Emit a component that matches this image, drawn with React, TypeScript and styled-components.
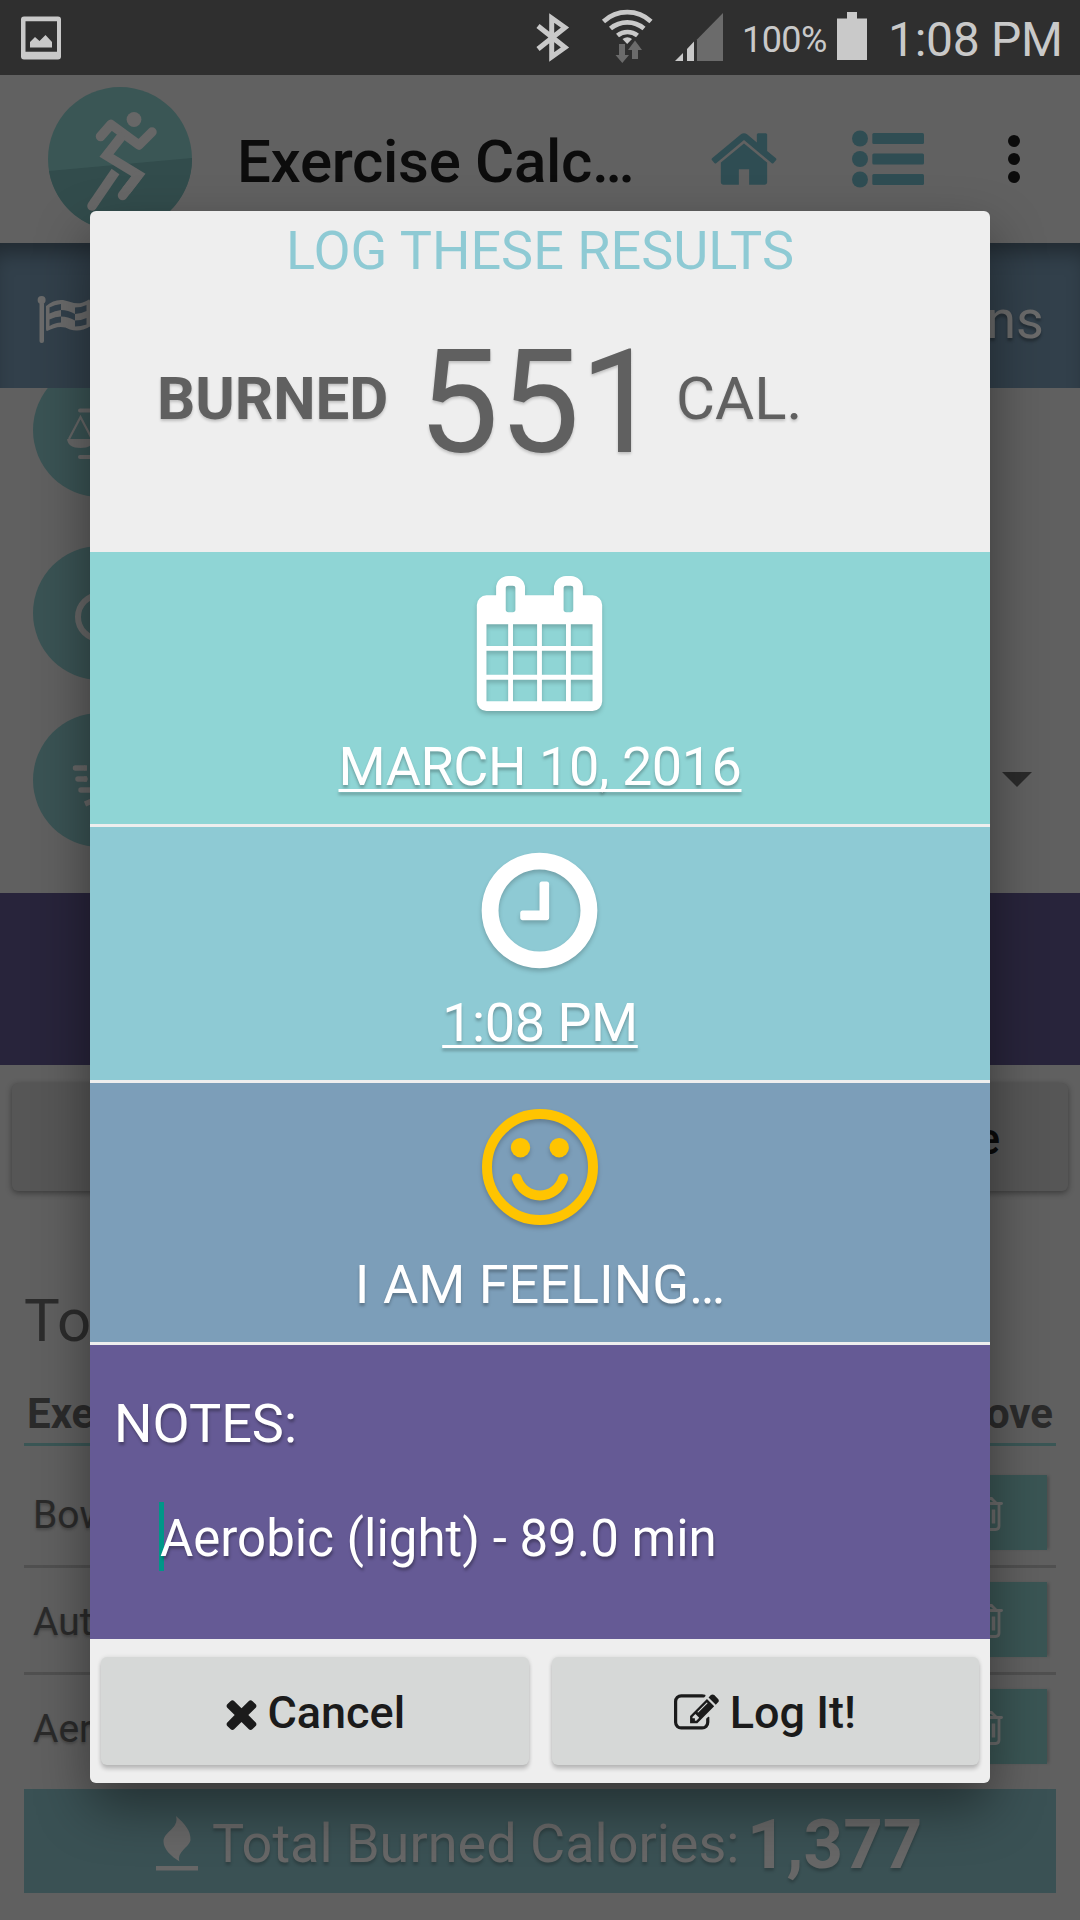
import React from "react";
import styled, { createGlobalStyle } from "styled-components";

const Global = createGlobalStyle`
  * { box-sizing: border-box; }
  body { margin: 0; background: #606060; font-family: Roboto, "Liberation Sans", sans-serif; }
  svg { display: block; flex: none; }
`;

const Screen = styled.div`
  position: relative;
  width: 1080px;
  height: 1920px;
  overflow: hidden;
  display: flex;
  flex-direction: column;
  background: #606060;
`;

/* ---------- status bar ---------- */
const StatusBar = styled.header`
  height: 75px;
  flex: none;
  display: flex;
  align-items: center;
  padding: 0 20px 0 21px;
  background: #2f2f2f;
  color: #c9c9c9;
`;
const StatusIcons = styled.div`
  display: flex;
  align-items: center;
  margin-left: auto;
`;
const Percent = styled.span`
  width: 95px;
  font-size: 36px;
  line-height: 72px;
  padding-top: 4px;
  letter-spacing: -0.6px;
`;
const Clock = styled.span`
  width: 172px;
  margin-left: 21px;
  padding-top: 4px;
  font-size: 48px;
  line-height: 78px;
  letter-spacing: -0.3px;
  white-space: nowrap;
`;

/* ---------- toolbar ---------- */
const Toolbar = styled.div`
  height: 168px;
  flex: none;
  display: flex;
  align-items: center;
  padding: 0 57px 0 48px;
  background: #616161;
`;
const Title = styled.h1`
  width: 466px;
  margin: 6px 0 0 45px;
  font-size: 60px;
  line-height: 72px;
  font-weight: 500;
  letter-spacing: -0.3px;
  color: #0c0c0c;
`;
const ToolIcon = styled.div<{ $left?: number }>`
  margin-left: ${(p) => p.$left ?? 0}px;
`;

/* ---------- page behind the dialog ---------- */
const Banner = styled.div`
  height: 145px;
  flex: none;
  display: flex;
  align-items: center;
  justify-content: space-between;
  padding: 7px 36px 0 37px;
  background: #32404b;
  box-shadow: inset 0 18px 20px -8px rgba(0, 0, 0, 0.35);
  color: #6b6b6b;
  font-size: 54px;
  text-shadow: 0 3px 3px rgba(0, 0, 0, 0.3);
`;
const Options = styled.div`
  height: 505px;
  flex: none;
  display: flex;
  justify-content: space-between;
  overflow: hidden;
  padding: 0 48px 0 33px;
`;
const Badges = styled.div`
  display: flex;
  flex-direction: column;
  margin-top: -25px;
`;
const Badge = styled.div<{ $gap?: number }>`
  width: 134px;
  height: 134px;
  flex: none;
  margin-top: ${(p) => p.$gap ?? 0}px;
  border-radius: 50%;
  background: #3a5354;
`;
const Caret = styled.div`
  margin-top: 384px;
  width: 0;
  height: 0;
  border: 15px solid transparent;
  border-top-color: #2a2a2a;
  border-bottom: 0;
`;
const Band = styled.div`
  height: 172px;
  flex: none;
  background: #28243b;
`;
const WideButton = styled.div`
  height: 108px;
  flex: none;
  margin: 18px 12px 0;
  padding-right: 68px;
  border-radius: 6px;
  background: #565656;
  box-shadow: 0 2px 6px rgba(0, 0, 0, 0.4);
  color: #0b0b0b;
  font-size: 45px;
  font-weight: 500;
  line-height: 112px;
  text-align: right;
`;
const Heading = styled.h2`
  margin: 94px 24px 0;
  height: 72px;
  flex: none;
  font-size: 60px;
  line-height: 72px;
  font-weight: 400;
  color: #2c2c2c;
`;
const TableHead = styled.div`
  height: 89px;
  flex: none;
  display: flex;
  justify-content: space-between;
  margin: 0 24px;
  padding: 31px 3px 0;
  border-bottom: 3px solid #3a5655;
  font-size: 42px;
  line-height: 52px;
  font-weight: 700;
  color: #2b2b2b;
`;
const Rows = styled.div`
  height: 343px;
  flex: none;
  padding-top: 15px;
`;
const Row = styled.div`
  height: 107px;
  display: flex;
  align-items: center;
  justify-content: space-between;
  margin: 0 24px;
  padding: 14px 9px 15px;
  border-bottom: 3px solid #505050;
  font-size: 39px;
  color: #2a2a2a;
  text-shadow: 0 2px 3px rgba(0, 0, 0, 0.25);

  &:last-child {
    border-bottom-color: transparent;
  }
`;
const EntryName = styled.span`
  padding-top: 5px;
`;
const Remove = styled.div`
  width: 119px;
  height: 75px;
  display: flex;
  align-items: center;
  justify-content: center;
  background: #3a5554;
  box-shadow: 3px 0 3px -1px rgba(0, 0, 0, 0.2);
`;
const Total = styled.div`
  height: 104px;
  flex: none;
  display: flex;
  align-items: center;
  margin: 0 24px;
  padding: 5px 0 0 132px;
  background: #3a5154;
  color: #676767;
  font-size: 54px;
  text-shadow: 0 3px 3px rgba(0, 0, 0, 0.2);
  white-space: nowrap;
`;
const TotalLabel = styled.span`
  width: 535px;
  margin-left: 14px;
  line-height: 99px;
`;
const TotalValue = styled.strong`
  padding-top: 3px;
  font-size: 69px;
  line-height: 96px;
`;

/* ---------- dialog ---------- */
const Overlay = styled.div`
  position: absolute;
  inset: 0;
  display: flex;
  justify-content: center;
  align-items: flex-start;
  padding-top: 211px;
`;
const Dialog = styled.section`
  width: 900px;
  height: 1572px;
  display: flex;
  flex-direction: column;
  overflow: hidden;
  border-radius: 6px;
  background: #eeeeee;
  box-shadow: 0 24px 54px rgba(0, 0, 0, 0.42);
`;
const Summary = styled.div`
  height: 341px;
  flex: none;
`;
const DialogTitle = styled.h3`
  margin: 0;
  font-size: 54px;
  line-height: 79px;
  font-weight: 400;
  text-align: center;
  color: #8ecad4;
`;
const Burned = styled.div`
  display: grid;
  grid-template-columns: 261px 258px auto;
  align-items: center;
  height: 216px;
  padding-left: 67px;
  font-size: 60px;
  color: #606060;
  text-shadow: 0 2px 3px rgba(0, 0, 0, 0.2);
`;
const Amount = styled.span`
  padding-top: 9px;
  font-size: 144px;
  line-height: 170px;
`;
const Panel = styled.div<{ $height: number; $color: string; $top: number }>`
  height: ${(p) => p.$height}px;
  flex: none;
  display: flex;
  flex-direction: column;
  align-items: center;
  margin-bottom: 3px;
  padding-top: ${(p) => p.$top}px;
  background: ${(p) => p.$color};
  color: #fff;

  svg {
    filter: drop-shadow(0 3px 2px rgba(0, 0, 0, 0.2));
  }
`;
const PanelIcon = styled.div`
  width: 136px;
`;
const PanelText = styled.div<{ $gap: number; $link?: boolean }>`
  margin-top: ${(p) => p.$gap}px;
  font-size: 54px;
  line-height: 64px;
  text-shadow: 0 3px 3px rgba(0, 0, 0, 0.25);
  ${(p) =>
    p.$link &&
    `letter-spacing: -0.45px;
     text-decoration: underline; text-decoration-thickness: 3px;
     text-underline-offset: 4px; text-decoration-skip-ink: none;`}
`;
const Notes = styled.div`
  height: 294px;
  flex: none;
  padding: 47px 24px 0;
  background: #655a95;
  color: #fff;
  font-size: 54px;
  line-height: 64px;
  text-shadow: 1px 3px 3px rgba(0, 0, 0, 0.3);
`;
const NoteField = styled.div`
  display: flex;
  align-items: center;
  height: 69px;
  margin: 46px 0 0 45px;
  font-size: 51px;
`;
const NoteText = styled.span`
  padding-top: 5px;
`;
const Cursor = styled.i`
  width: 5px;
  height: 69px;
  margin-right: -4px;
  background: #009688;
`;
const Actions = styled.div`
  flex: 1;
  display: grid;
  grid-template-columns: 1fr 1fr;
  gap: 23px;
  padding: 18px 11px;
`;
const Button = styled.button<{ $gap: number; $shift: number }>`
  height: 108px;
  display: flex;
  align-items: center;
  justify-content: center;
  gap: ${(p) => p.$gap}px;
  padding: 4px ${(p) => p.$shift}px 0 0;
  border: 0;
  border-radius: 6px;
  background: #d6d8d7;
  box-shadow: 0 4px 4px rgba(0, 0, 0, 0.2), 0 0 4px rgba(0, 0, 0, 0.1);
  color: #1b1b1b;
  font: 500 45px/54px Roboto, "Liberation Sans", sans-serif;
`;

/* ---------- icons ---------- */
const paths = {
  calendar:
    "M192 1664h288v-288h-288v288zm352 0h320v-288h-320v288zm-352-352h288v-320h-288v320zm352 0h320v-320h-320v320zm-352-384h288v-288h-288v288zm736 736h320v-288h-320v288zm-384-736h320v-288h-320v288zm768 736h288v-288h-288v288zm-384-352h320v-320h-320v320zm-352-864v-288q0-13-9.5-22.5t-22.5-9.5h-64q-13 0-22.5 9.5t-9.5 22.5v288q0 13 9.5 22.5t22.5 9.5h64q13 0 22.5-9.5t9.5-22.5zm736 864h288v-320h-288v320zm-384-384h320v-288h-320v288zm384 0h288v-288h-288v288zm32-480v-288q0-13-9.5-22.5t-22.5-9.5h-64q-13 0-22.5 9.5t-9.5 22.5v288q0 13 9.5 22.5t22.5 9.5h64q13 0 22.5-9.5t9.5-22.5zm384-64v1280q0 52-38 90t-90 38h-1408q-52 0-90-38t-38-90v-1280q0-52 38-90t90-38h128v-96q0-66 47-113t113-47h64q66 0 113 47t47 113v96h384v-96q0-66 47-113t113-47h64q66 0 113 47t47 113v96h128q52 0 90 38t38 90z",
  clock:
    "M1024 544v448q0 14-9 23t-23 9h-320q-14 0-23-9t-9-23v-64q0-14 9-23t23-9h224v-352q0-14 9-23t23-9h64q14 0 23 9t9 23zm416 352q0-148-73-273t-198-198-273-73-273 73-198 198-73 273 73 273 198 198 273 73 273-73 198-198 73-273zm224 0q0 209-103 385.5t-279.5 279.5-385.5 103-385.5-103-279.5-279.5-103-385.5 103-385.5 279.5-279.5 385.5-103 385.5 103 279.5 279.5 103 385.5z",
  edit:
    "M888 1184l116-116-152-152-116 116v56h96v96h56zm440-720q-16-16-33 1l-350 350q-17 17-1 33t33-1l350-350q17-17 1-33zm80 594v190q0 119-84.5 203.5t-203.5 84.5h-832q-119 0-203.5-84.5t-84.5-203.5v-832q0-119 84.5-203.5t203.5-84.5h832q63 0 117 25 15 7 18 23 3 17-9 29l-49 49q-14 14-32 8-23-6-45-6h-832q-66 0-113 47t-47 113v832q0 66 47 113t113 47h832q66 0 113-47t47-113v-126q0-13 9-22l64-64q15-15 35-7t20 29zm-96-738l288 288-672 672h-288v-288zm444 132l-92 92-288-288 92-92q28-28 68-28t68 28l152 152q28 28 28 68t-28 68z",
  times:
    "M1490 1322q0 40-28 68l-136 136q-28 28-68 28t-68-28l-294-294-294 294q-28 28-68 28t-68-28l-136-136q-28-28-28-68t28-68l294-294-294-294q-28-28-28-68t28-68l136-136q28-28 68-28t68 28l294 294 294-294q28-28 68-28t68 28l136 136q28 28 28 68t-28 68l-294 294 294 294q28 28 28 68z",
  home:
    "M1472 992v480q0 26-19 45t-45 19h-384v-384h-256v384h-384q-26 0-45-19t-19-45v-480q0-1 .5-3t.5-3l575-474 575 474q1 2 1 6zm223-69l-62 74q-8 9-21 11h-3q-13 0-21-7l-692-577-692 577q-12 8-24 7-13-2-21-11l-62-74q-8-10-7-23.5t11-21.5l719-599q32-26 76-26t76 26l244 204v-195q0-14 9-23t23-9h192q14 0 23 9t9 23v408l219 182q10 8 11 21.5t-7 23.5z",
};

function Glyph({ name, size, color = "currentColor" }: { name: keyof typeof paths; size: number; color?: string }) {
  return (
    <svg width={size} height={size} viewBox="0 0 1792 1792" fill={color}>
      <path d={paths[name]} />
    </svg>
  );
}

function Gallery() {
  return (
    <svg width="40" height="75" viewBox="21 0 40 75">
      <path fill="#c9c9c9" fillRule="evenodd" d="M24 16.500h34a3 3 0 0 1 3 3v37a3 3 0 0 1-3 3h-34a3 3 0 0 1-3-3v-37a3 3 0 0 1 3-3zM25.500 21.300v30.400h31.500v-30.400z" />
      <path fill="#c9c9c9" d="M30 42l5-5 4.500 4 6-6 6.500 7v5.500h-22z" />
    </svg>
  );
}

function StatusGlyphs() {
  return (
    <svg width="207" height="75" viewBox="535 0 207 75" fill="none">
      <path stroke="#c9c9c9" strokeWidth="5" d="M538 26l27 21.500-13.300 9.500v-39l13.300 9.500-27 21.500" />
      <g stroke="#c9c9c9" strokeWidth="4.700">
        <path d="M603.500 21.500a35 35 0 0 1 47.500 0" />
        <path d="M610.500 28.500a26 26 0 0 1 33.500 0" />
        <path d="M617.500 35.500a16 16 0 0 1 20 0" />
      </g>
      <path fill="#c9c9c9" d="M622.500 39q5-3.500 9.500 0l-4.800 5z" />
      <path fill="#6b6b6b" d="M619 44h6v11h4l-6.700 8-6.800-8h3.500zM632 59v-9h-4l7-9.500 7 9.500h-4v9z" />
      <path fill="#c9c9c9" d="M675 61l8-8v8zM687 61v-12l7-7.500v19.500z" />
      <path fill="#6b6b6b" d="M697 61v-21.500l26-26.500v48z" />
    </svg>
  );
}

function Battery() {
  return (
    <svg width="30" height="75" viewBox="0 0 30 75" fill="#c9c9c9">
      <path d="M0 18.500h10v-6.500h10v6.500h10v41.500h-30z" />
    </svg>
  );
}

function Logo() {
  return (
    <svg width="144" height="144" viewBox="48 87 144 144" fill="none">
      <circle cx="120" cy="159" r="72" fill="#3a5655" />
      <path d="M49 171L192 158A72 72 0 0 1 49 171z" fill="#324c4c" />
      <circle cx="134" cy="119.500" r="7.400" fill="#676767" />
      <g stroke="#676767" strokeWidth="9.500" strokeLinejoin="round">
        <path strokeLinecap="round" d="M100.500 136.500L111 124.500L139 145L152 132" />
        <path strokeLinejoin="miter" d="M123 134.500L106.500 155.500L138.500 175L126 191" />
        <path strokeLinecap="round" d="M137.500 176L122.500 195.500" />
        <path d="M115.500 171.500L94 203" />
        <path strokeLinecap="round" d="M94 203L92 206" />
      </g>
    </svg>
  );
}

function ListIcon() {
  return (
    <svg width="72" height="58" viewBox="0 0 72 58" fill="#2f4d53">
      {[0, 20.5, 41].map((y) => (
        <g key={y}>
          <circle cx="8" cy={8.5 + y} r="8" />
          <rect x="20.300" y={3 + y} width="51.700" height="11" rx="1.500" />
        </g>
      ))}
    </svg>
  );
}

function Overflow() {
  return (
    <svg width="12" height="48" viewBox="0 0 12 48" fill="#0b0b0b">
      <circle cx="6" cy="6" r="6" />
      <circle cx="6" cy="24" r="6" />
      <circle cx="6" cy="42" r="6" />
    </svg>
  );
}

function Flag() {
  return (
    <svg width="54" height="50" viewBox="36 295 54 50">
      <g fill="#6b6b6b">
        <circle cx="40.600" cy="301" r="4" />
        <rect x="38.500" y="303" width="4.500" height="41" rx="2" />
        <path d="M45 307q8-7 17-6c9 1.500 14 7 26-.5q1 0 1 2v25q-10 6-20 3c-8-4.500-15-2.500-23 1.500q-1 0-1-2z" />
      </g>
      <g fill="#32404b">
        <path d="M48.500 308.500q5-3 11.500-3.500v6q-6 .5-11.500 3.500z" />
        <path d="M74 308.500q6 0 11.500-2.500v6q-6 3-11.500 3z" />
        <path d="M60 311q7 0 14 4v6.500q-7-4-14-4z" />
        <path d="M48.500 320.500q6-3 11.500-3v6q-6 0-11.500 3.500z" />
        <path d="M74 321.500q6 0 11.500-2.500v6.500q-6 2-11.500 2z" />
      </g>
    </svg>
  );
}

function ScaleIcon() {
  return (
    <svg width="134" height="134" viewBox="33 363 134 134" fill="none" stroke="#676767">
      <path strokeWidth="4" strokeLinecap="round" d="M80 410.500h20M80 457h20" />
      <path strokeWidth="2.200" d="M69 439L80.500 417L92 439" />
      <path fill="#676767" stroke="none" d="M67 439h27q-1 9-13.500 9t-13.500-9z" />
    </svg>
  );
}
function RingIcon() {
  return (
    <svg width="134" height="134" viewBox="33 546 134 134" fill="none" stroke="#676767">
      <circle cx="100" cy="617" r="22" strokeWidth="6" />
    </svg>
  );
}
function SpeedIcon() {
  return (
    <svg width="134" height="134" viewBox="33 713 134 134" fill="none" stroke="#676767">
      <path strokeWidth="5.500" strokeLinecap="round" d="M75.500 768h8M78 779h7M81 790h10" />
      <path strokeWidth="5.500" d="M84 768h3M84 779h3M85 804l7-3" />
    </svg>
  );
}

function Trash() {
  return (
    <svg width="30" height="36" viewBox="0 0 30 36" fill="none" stroke="#6b6b6b" strokeWidth="2.800">
      <path strokeLinecap="round" d="M1.500 8.500h27" />
      <path d="M7.500 8l4-4.500h7l4.500 4.500" />
      <path d="M4 9v22q0 3.500 3.500 3.500h15q3.500 0 3.500-3.500v-22" />
      <path d="M9.500 14.500v14M15 14.500v14" />
      <path strokeWidth="3.500" d="M20.500 14.500v14" />
    </svg>
  );
}

function Flame() {
  return (
    <svg width="42" height="60" viewBox="156 1814 42 60" fill="#676767">
      <path d="M176 1816c9 8 15 15 14.500 24c-1 7-14 12-11 21.500c-8-5-16-12-16-20c0-10 16-13 12.500-25.500z" />
      <rect x="156" y="1866" width="42" height="4.500" />
    </svg>
  );
}

function Smile() {
  return (
    <svg width="116" height="116" viewBox="0 0 116 116" fill="none" stroke="#ffc400" strokeWidth="10">
      <circle cx="58" cy="58" r="53" />
      <circle cx="38.500" cy="38.700" r="9.700" fill="#ffc400" stroke="none" />
      <circle cx="77.200" cy="38.700" r="9.700" fill="#ffc400" stroke="none" />
      <path strokeLinecap="round" d="M34.800 69.500A24.300 24.300 0 0 0 81.100 69.500" />
    </svg>
  );
}

const entries = ["Bow", "Aut", "Aer"];

export default function App() {
  return (
    <>
      <Global />
      <Screen>
        <StatusBar>
          <Gallery />
          <StatusIcons>
            <StatusGlyphs />
            <Percent>100%</Percent>
            <Battery />
            <Clock>1:08 PM</Clock>
          </StatusIcons>
        </StatusBar>
        <Toolbar>
          <Logo />
          <Title>Exercise Calc…</Title>
          <ToolIcon $left={5}>
            <Glyph name="home" size={72} color="#2f4d53" />
          </ToolIcon>
          <ToolIcon $left={72}>
            <ListIcon />
          </ToolIcon>
          <ToolIcon $left={84}>
            <Overflow />
          </ToolIcon>
        </Toolbar>
        <Banner>
          <Flag />
          <span>ns</span>
        </Banner>
        <Options>
          <Badges>
            <Badge><ScaleIcon /></Badge>
            <Badge $gap={49}><RingIcon /></Badge>
            <Badge $gap={33}><SpeedIcon /></Badge>
          </Badges>
          <Caret />
        </Options>
        <Band />
        <WideButton>e</WideButton>
        <Heading>To</Heading>
        <TableHead>
          <span>Exe</span>
          <span>ove</span>
        </TableHead>
        <Rows>
          {entries.map((name) => (
            <Row key={name}>
              <EntryName>{name}</EntryName>
              <Remove>
                <Trash />
              </Remove>
            </Row>
          ))}
        </Rows>
        <Total>
          <Flame />
          <TotalLabel>Total Burned Calories:</TotalLabel>
          <TotalValue>1,377</TotalValue>
        </Total>

        <Overlay>
          <Dialog>
            <Summary>
              <DialogTitle>LOG THESE RESULTS</DialogTitle>
              <Burned>
                <strong>BURNED</strong>
                <Amount>551</Amount>
                <span>CAL.</span>
              </Burned>
            </Summary>
            <Panel $height={272} $color="#8fd5d5" $top={24}>
              <PanelIcon>
                <Glyph name="calendar" size={135} />
              </PanelIcon>
              <PanelText $gap={24} $link>MARCH 10, 2016</PanelText>
            </Panel>
            <Panel $height={253} $color="#8ecad4" $top={16}>
              <PanelIcon>
                <Glyph name="clock" size={135} />
              </PanelIcon>
              <PanelText $gap={13} $link>1:08 PM</PanelText>
            </Panel>
            <Panel $height={259} $color="#7c9eb9" $top={26}>
              <Smile />
              <PanelText $gap={28}>I AM FEELING…</PanelText>
            </Panel>
            <Notes>
              NOTES:
              <NoteField>
                <Cursor />
                <NoteText>Aerobic (light) - 89.0 min</NoteText>
              </NoteField>
            </Notes>
            <Actions>
              <Button $gap={3} $shift={5}>
                <Glyph name="times" size={45} />
                Cancel
              </Button>
              <Button $gap={11} $shift={1}>
                <Glyph name="edit" size={45} />
                Log It!
              </Button>
            </Actions>
          </Dialog>
        </Overlay>
      </Screen>
    </>
  );
}
